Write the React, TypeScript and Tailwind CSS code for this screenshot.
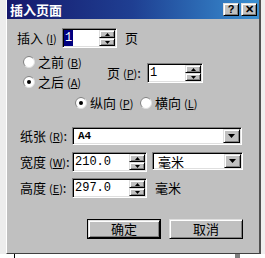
import React from "react";

const CJK = "font-['Noto_Sans_CJK_SC',sans-serif]";
const MONO = "font-['Liberation_Mono',monospace]";

const raised =
  "border border-t-[#dfdfdf] border-l-[#dfdfdf] border-r-black border-b-black shadow-[inset_1px_1px_0_#ffffff,inset_-1px_-1px_0_#808080] bg-[#c0c0c0]";
const sunken =
  "border border-t-[#808080] border-l-[#808080] border-r-white border-b-white shadow-[inset_1px_1px_0_#000000,inset_-1px_-1px_0_#dfdfdf] bg-white";

function Key({ k }: { k: string }) {
  return (
    <span className="text-[11px]">
      (<span className="underline">{k}</span>)
    </span>
  );
}

function Tri({ up }: { up?: boolean }) {
  return (
    <svg width="5" height="3" viewBox="0 0 5 3" className="block">
      <path d={up ? "M2.5 0 L5 3 L0 3Z" : "M0 0 L5 0 L2.5 3Z"} fill="#000" />
    </svg>
  );
}

function Spin({ w, value, selected }: { w: string; value: string; selected?: boolean }) {
  return (
    <div className={`${sunken} ${w} h-[20px] p-[1px] flex`}>
      <div className={`flex-1 flex items-center pl-[0px] ${MONO} text-[12px] leading-none`}>
        <span className={selected ? "bg-[#000080] text-white px-[1px] py-[2px]" : "px-[1px]"}>{value}</span>
      </div>
      <div className="w-[16px] flex flex-col">
        <div className={`${raised} flex-1 flex items-center justify-center`}>
          <Tri up />
        </div>
        <div className={`${raised} flex-1 flex items-center justify-center`}>
          <Tri />
        </div>
      </div>
    </div>
  );
}

function Combo({ w, children }: { w: string; children: React.ReactNode }) {
  return (
    <div className={`${sunken} ${w} h-[18px] p-[1px] flex`}>
      <div className="flex-1 flex items-center pl-[4px] text-[12px] leading-none">{children}</div>
      <div className={`${raised} w-[17px] flex items-center justify-center`}>
        <svg width="7" height="4" viewBox="0 0 7 4" className="block">
          <path d="M0 0 L7 0 L3.5 4Z" fill="#000" />
        </svg>
      </div>
    </div>
  );
}

function Radio({ label, k, checked, className }: { label: string; k: string; checked?: boolean; className?: string }) {
  return (
    <div className={`flex items-center h-[20px] whitespace-nowrap ${className ?? ""}`}>
      <svg width="12" height="12" viewBox="0 0 12 12" className="block shrink-0">
        <circle cx="6" cy="6" r="5.5" fill="#ffffff" stroke="#dfdfdf" />
        <path d="M2.11 9.89 A5.5 5.5 0 0 1 9.89 2.11" fill="none" stroke="#808080" />
        {checked && <circle cx="6" cy="6" r="2" fill="#000" />}
      </svg>
      <span className="ml-[3px] text-[13px]">
        {label} <Key k={k} />
      </span>
    </div>
  );
}

function TitleBtn({ children }: { children: React.ReactNode }) {
  return (
    <div className={`${raised} w-[16px] h-[13px] flex items-center justify-center text-[11px] font-bold leading-none font-['Liberation_Sans',sans-serif] text-black`}>
      {children}
    </div>
  );
}

function Label({ text, k, w }: { text: string; k: string; w: string }) {
  return (
    <div className={`${w} whitespace-nowrap text-[13px]`}>
      {text} <Key k={k} />:
    </div>
  );
}

export default function App() {
  return (
    <div className={`w-[265px] h-[258px] bg-white flex flex-col ${CJK} text-black`}>
      <div className="flex h-[254px]">
        <div className="w-[6px] bg-[#ececec]" />
        <div className="w-[255px] bg-[#c0c0c0] border-l border-l-white border-r-2 border-r-[#505050] border-b border-b-[#404040] flex flex-col">
          {/* title bar */}
          <div className="h-[19px] bg-gradient-to-r from-[#16186c] via-[#1f3f92] to-[#3b90d2] flex items-center pl-[3px] pr-[2px]">
            <span className="text-white font-bold text-[13px] leading-none">插入页面</span>
            <div className="ml-auto flex gap-[2px]">
              <TitleBtn>?</TitleBtn>
              <TitleBtn>✕</TitleBtn>
            </div>
          </div>

          {/* row 1 */}
          <div className="flex items-center h-[20px] mt-[9px] pl-[10px]">
            <div className="w-[45px] whitespace-nowrap text-[13px]">
              插入 <Key k="I" />
            </div>
            <Spin w="w-[55px]" value="1" selected />
            <div className="ml-[8px] text-[13px]">页</div>
          </div>

          {/* row 2 */}
          <div className="flex mt-[4px] h-[40px]">
            <div className="w-[100px] pl-[16px] flex flex-col">
              <Radio label="之前" k="B" />
              <Radio label="之后" k="A" checked />
            </div>
            <div className="flex items-center h-[20px] mt-[11px]">
              <div className="w-[40px] whitespace-nowrap text-[13px]">
                页 <Key k="P" />:
              </div>
              <Spin w="w-[56px]" value="1" />
            </div>
          </div>

          {/* row 3 */}
          <div className="flex mt-[1px] h-[20px] pl-[68px]">
            <Radio label="纵向" k="P" checked className="w-[65px]" />
            <Radio label="横向" k="L" />
          </div>

          {/* row 4 */}
          <div className="flex items-center mt-[14px] h-[18px] pl-[13px]">
            <Label text="纸张" k="R" w="w-[52px]" />
            <Combo w="w-[170px]">
              <span className={`${MONO} text-[11px] font-bold`}>A4</span>
            </Combo>
          </div>

          {/* row 5 */}
          <div className="flex items-start mt-[7px] h-[20px] pl-[13px]">
            <div className="h-[20px] flex items-center">
              <Label text="宽度" k="W" w="w-[52px]" />
            </div>
            <Spin w="w-[75px]" value="210.0" />
            <div className="ml-[5px]">
              <Combo w="w-[91px]">
                <span className="text-[13px]">毫米</span>
              </Combo>
            </div>
          </div>

          {/* row 6 */}
          <div className="flex items-center mt-[6px] h-[20px] pl-[13px]">
            <Label text="高度" k="E" w="w-[52px]" />
            <Spin w="w-[75px]" value="297.0" />
            <div className="ml-[8px] text-[13px]">毫米</div>
          </div>

          {/* buttons */}
          <div className="flex mt-[21px] h-[20px] pl-[80px] gap-[8px]">
            <div className="w-[74px] h-[20px] border border-black">
              <div className={`${raised} w-full h-full flex items-center justify-center text-[13px]`}>确定</div>
            </div>
            <div className={`${raised} w-[74px] h-[20px] flex items-center justify-center text-[13px]`}>取消</div>
          </div>
        </div>
        <div className="flex-1 bg-[#efefef]" />
      </div>
      <div className="flex h-[4px]">
        <div className="w-[14px]" />
        <div className="w-[1px] bg-black" />
        <div className="w-[220px]" />
        <div className="w-[5px] bg-[#808080]" />
      </div>
    </div>
  );
}
